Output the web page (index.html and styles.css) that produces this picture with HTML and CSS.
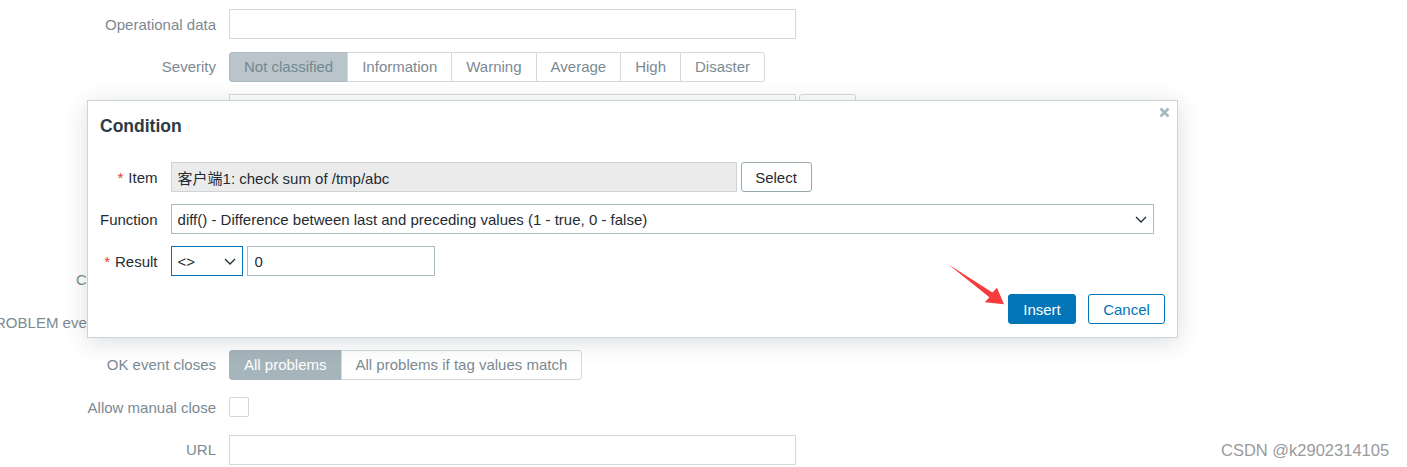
FILE: index.html
```html
<!DOCTYPE html>
<html lang="en">
<head>
    <meta charset="UTF-8">
    <title>Trigger - Condition</title>
    <link rel="stylesheet" href="styles.css">
</head>
<body>
    <!-- Trigger form behind the dialog -->
    <div class="trigger-form">
        <div class="form-label">Operational data</div>
        <div class="form-field"><input type="text" class="text-box"></div>

        <div class="form-label">Severity</div>
        <div class="form-field">
            <div class="radio-list severity">
                <span class="radio-item selected">Not classified</span>
                <span class="radio-item">Information</span>
                <span class="radio-item">Warning</span>
                <span class="radio-item">Average</span>
                <span class="radio-item">High</span>
                <span class="radio-item">Disaster</span>
            </div>
        </div>

        <div class="form-label"></div>
        <div class="form-field">
            <input type="text" class="text-box">
            <button class="btn-alt small"></button>
        </div>

        <div class="form-label"></div>
        <div class="form-field"></div>

        <div class="form-label"></div>
        <div class="form-field"></div>

        <div class="form-label"></div>
        <div class="form-field"></div>

        <div class="form-label">Condition expression</div>
        <div class="form-field"></div>

        <div class="form-label">PROBLEM event generation mode</div>
        <div class="form-field"></div>

        <div class="form-label">OK event closes</div>
        <div class="form-field">
            <div class="radio-list closes">
                <span class="radio-item selected">All problems</span>
                <span class="radio-item">All problems if tag values match</span>
            </div>
        </div>

        <div class="form-label">Allow manual close</div>
        <div class="form-field"><span class="checkbox"></span></div>

        <div class="form-label">URL</div>
        <div class="form-field"><input type="text" class="text-box"></div>
    </div>

    <!-- Condition dialog -->
    <div class="dialog">
        <div class="dialog-header">
            <h4>Condition</h4>
            <svg class="dialog-close" width="11" height="11" viewBox="0 0 11 11">
                <path d="M1.5 1.5 L9.5 9.5 M9.5 1.5 L1.5 9.5" stroke="#a9b6bd" stroke-width="2.6" fill="none"/>
            </svg>
        </div>

        <div class="dialog-body">
            <div class="dialog-label"><span class="asterisk">*</span> Item</div>
            <div class="dialog-field">
                <input type="text" class="item-box" value="客户端1: check sum of /tmp/abc" readonly>
                <button class="btn-grey">Select</button>
            </div>

            <div class="dialog-label">Function</div>
            <div class="dialog-field">
                <div class="select function-select">
                    <span>diff() - Difference between last and preceding values (1 - true, 0 - false)</span>
                    <svg width="12" height="7" viewBox="0 0 12 7"><path d="M1 1 L6 6 L11 1" stroke="#1f2c33" stroke-width="1.3" fill="none"/></svg>
                </div>
            </div>

            <div class="dialog-label"><span class="asterisk">*</span> Result</div>
            <div class="dialog-field">
                <div class="select result-select">
                    <span>&lt;&gt;</span>
                    <svg width="12" height="7" viewBox="0 0 12 7"><path d="M1 1 L6 6 L11 1" stroke="#1f2c33" stroke-width="1.3" fill="none"/></svg>
                </div>
                <input type="text" class="value-box" value="0">
            </div>
        </div>

        <div class="dialog-footer">
            <button class="btn-primary">Insert</button>
            <button class="btn-secondary">Cancel</button>
        </div>
    </div>

    <!-- annotation arrow -->
    <svg class="arrow" width="70" height="52" viewBox="940 258 70 52">
        <polygon points="948.5,264.5 992.4,292.6 997,287.8 1004,304.3 984.8,302.2 989.4,297.3" fill="#f53b3b"/>
    </svg>

    <div class="watermark">CSDN @k2902314105</div>
</body>
</html>
```

FILE: styles.css
```css
/* General styling */
body {
    margin: 0;
    font-family: "Liberation Sans", Arial, "Noto Sans CJK SC", sans-serif;
    font-size: 15px;
    color: #1f2c33;
    background-color: #ffffff;
    height: 467px;
    overflow: hidden;
}

/* Background trigger form */
.trigger-form {
    display: grid;
    grid-template-columns: 216px 1fr;
    grid-auto-rows: 30px;
    column-gap: 13px;
    row-gap: 12.6px;
    padding-top: 9px;
}

.form-label {
    display: flex;
    justify-content: flex-end;
    align-items: center;
    white-space: nowrap;
    color: #7b8a92;
}

.form-field {
    display: flex;
    align-items: center;
    gap: 3px;
}

.text-box {
    box-sizing: border-box;
    width: 567px;
    height: 30px;
    border: 1px solid #d2d8db;
    background-color: #fff;
    margin: 0;
}

.btn-alt.small {
    box-sizing: border-box;
    width: 57px;
    height: 30px;
    border: 1px solid #d2d8db;
    border-radius: 3px;
    background-color: #fff;
    color: #7b8a92;
    font: inherit;
}

.radio-list {
    display: flex;
    height: 30px;
}

.radio-item {
    display: flex;
    align-items: center;
    box-sizing: border-box;
    height: 30px;
    padding: 0 14px;
    border: 1px solid #d3d9dc;
    margin-left: -1px;
    color: #7b8a92;
    background-color: #fff;
}

.radio-item:first-child {
    margin-left: 0;
    border-radius: 3px 0 0 3px;
}

.radio-item:last-child {
    border-radius: 0 3px 3px 0;
}

.severity .selected {
    background-color: #b9c5cb;
    border-color: #aebbc2;
    color: #748892;
}

.closes .selected {
    background-color: #a6b4bc;
    border-color: #a6b4bc;
    color: #ffffff;
}

.checkbox {
    box-sizing: border-box;
    width: 20px;
    height: 20px;
    border: 1px solid #d2d8db;
    border-radius: 2px;
    background-color: #fff;
}

/* Dialog */
.dialog {
    position: absolute;
    left: 87px;
    top: 100px;
    width: 1091px;
    height: 238px;
    box-sizing: border-box;
    background-color: #ffffff;
    border: 1px solid #ccd4d8;
    box-shadow: 0 4px 22px rgba(30, 45, 55, 0.16);
    padding: 0 12px;
}

.dialog-header {
    position: relative;
    padding-top: 15px;
}

.dialog-header h4 {
    margin: 0;
    font-size: 17.5px;
    line-height: 21px;
    font-weight: bold;
    color: #2c3b43;
}

.dialog-close {
    position: absolute;
    top: 6px;
    right: -5px;
}

.dialog-body {
    display: grid;
    grid-template-columns: max-content 1fr;
    grid-auto-rows: 30px;
    column-gap: 13px;
    row-gap: 12px;
    margin-top: 25px;
}

.dialog-label {
    display: flex;
    justify-content: flex-end;
    align-items: center;
    white-space: nowrap;
}

.asterisk {
    color: #e33734;
    margin-right: 5px;
}

.dialog-field {
    display: flex;
    align-items: center;
    gap: 4px;
}

.item-box {
    box-sizing: border-box;
    width: 566px;
    height: 30px;
    margin: 0;
    padding: 0 6px;
    border: 1px solid #cdd3d6;
    background-color: #ebebeb;
    color: #1f2c33;
    font: inherit;
    outline: none;
}

.btn-grey {
    box-sizing: border-box;
    width: 71px;
    height: 30px;
    margin: 0;
    border: 1px solid #9aa8b0;
    border-radius: 3px;
    background-color: #ffffff;
    color: #1f2c33;
    font: inherit;
}

.select {
    box-sizing: border-box;
    height: 30px;
    display: flex;
    align-items: center;
    justify-content: space-between;
    padding: 0 6px 0 6px;
    border: 1px solid #acbbc2;
    background-color: #ffffff;
    white-space: nowrap;
}

.function-select {
    width: 983px;
}

.result-select {
    width: 72px;
    border-color: #0275b8;
}

.value-box {
    box-sizing: border-box;
    width: 188px;
    height: 30px;
    margin: 0;
    padding: 0 7px;
    border: 1px solid #acbbc2;
    color: #1f2c33;
    font: inherit;
}

.dialog-footer {
    display: flex;
    justify-content: flex-end;
    gap: 12px;
    margin-top: 18px;
}

.btn-primary,
.btn-secondary {
    box-sizing: border-box;
    height: 30px;
    border-radius: 3px;
    font: inherit;
    padding: 0;
}

.btn-primary {
    width: 68px;
    border: 1px solid #0275b8;
    background-color: #0275b8;
    color: #ffffff;
}

.btn-secondary {
    width: 77px;
    border: 1px solid #0275b8;
    background-color: #ffffff;
    color: #0275b8;
}

/* Overlays */
.arrow {
    position: absolute;
    left: 940px;
    top: 258px;
}

.watermark {
    position: absolute;
    left: 1221px;
    top: 441px;
    font-size: 16.5px;
    color: #9a9a9a;
    white-space: nowrap;
}
```
